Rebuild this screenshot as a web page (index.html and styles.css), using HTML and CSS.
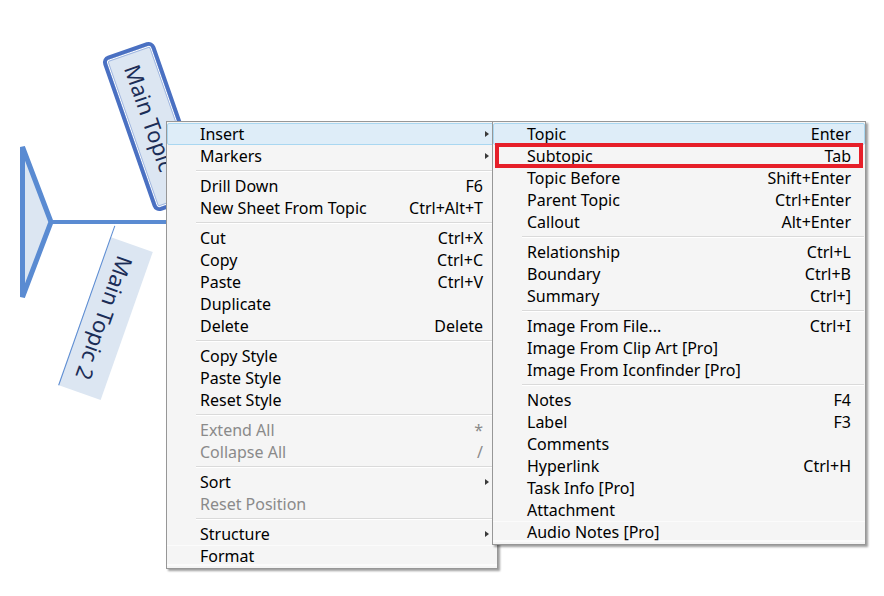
FILE: index.html
```html
<!DOCTYPE html>
<html>
<head>
<meta charset="utf-8">
<link rel="stylesheet" href="styles.css">
</head>
<body>
<div class="stage">
  <svg class="fish" width="884" height="596" viewBox="0 0 884 596">
    <polygon points="22.5,147 51,222 22.5,297" fill="#dce6f2" stroke="#5a8bd2" stroke-width="5" stroke-linejoin="bevel"/>
    <line x1="50" y1="222" x2="200" y2="222" stroke="#5a8bd2" stroke-width="4"/>
  </svg>
  <div class="topic topic-main"><span>Main Topic</span></div>
  <div class="topic topic-sub"><span>Main Topic 2</span></div>

  <div class="menu menu-main">
    <div class="item active"><span>Insert</span><i class="arrow"></i></div>
    <div class="item"><span>Markers</span><i class="arrow"></i></div>
    <div class="sep"></div>
    <div class="item"><span>Drill Down</span><span>F6</span></div>
    <div class="item"><span>New Sheet From Topic</span><span>Ctrl+Alt+T</span></div>
    <div class="sep"></div>
    <div class="item"><span>Cut</span><span>Ctrl+X</span></div>
    <div class="item"><span>Copy</span><span>Ctrl+C</span></div>
    <div class="item"><span>Paste</span><span>Ctrl+V</span></div>
    <div class="item"><span>Duplicate</span></div>
    <div class="item"><span>Delete</span><span>Delete</span></div>
    <div class="sep"></div>
    <div class="item"><span>Copy Style</span></div>
    <div class="item"><span>Paste Style</span></div>
    <div class="item"><span>Reset Style</span></div>
    <div class="sep"></div>
    <div class="item disabled"><span>Extend All</span><span>*</span></div>
    <div class="item disabled"><span>Collapse All</span><span>/</span></div>
    <div class="sep"></div>
    <div class="item"><span>Sort</span><i class="arrow"></i></div>
    <div class="item disabled"><span>Reset Position</span></div>
    <div class="sep"></div>
    <div class="item"><span>Structure</span><i class="arrow"></i></div>
    <div class="item last"><span>Format</span></div>
  </div>

  <div class="menu menu-sub">
    <div class="item active"><span>Topic</span><span>Enter</span></div>
    <div class="item"><span>Subtopic</span><span>Tab</span></div>
    <div class="item"><span>Topic Before</span><span>Shift+Enter</span></div>
    <div class="item"><span>Parent Topic</span><span>Ctrl+Enter</span></div>
    <div class="item"><span>Callout</span><span>Alt+Enter</span></div>
    <div class="sep"></div>
    <div class="item"><span>Relationship</span><span>Ctrl+L</span></div>
    <div class="item"><span>Boundary</span><span>Ctrl+B</span></div>
    <div class="item"><span>Summary</span><span>Ctrl+]</span></div>
    <div class="sep"></div>
    <div class="item"><span>Image From File...</span><span>Ctrl+I</span></div>
    <div class="item"><span>Image From Clip Art [Pro]</span></div>
    <div class="item"><span>Image From Iconfinder [Pro]</span></div>
    <div class="sep"></div>
    <div class="item"><span>Notes</span><span>F4</span></div>
    <div class="item"><span>Label</span><span>F3</span></div>
    <div class="item"><span>Comments</span></div>
    <div class="item"><span>Hyperlink</span><span>Ctrl+H</span></div>
    <div class="item"><span>Task Info [Pro]</span></div>
    <div class="item"><span>Attachment</span></div>
    <div class="item last"><span>Audio Notes [Pro]</span></div>
    <div class="mark"></div>
  </div>
</div>
</body>
</html>
```
FILE: styles.css
```css
html, body {
  margin: 0;
  padding: 0;
  background: #ffffff;
}

.stage {
  position: relative;
  width: 884px;
  height: 596px;
  overflow: hidden;
  font-family: "Noto Sans", "Open Sans", sans-serif;
}

.fish {
  position: absolute;
  left: 0;
  top: 0;
}

.topic {
  position: absolute;
  box-sizing: border-box;
  display: flex;
  align-items: center;
  background: #dce6f2;
  color: #1b2d57;
  font-size: 22px;
  white-space: nowrap;
}

.topic-main {
  left: 72px;
  top: 98.5px;
  width: 164px;
  height: 55px;
  transform: rotate(70.8deg);
  border: 4px solid #4a70c2;
  border-radius: 7px;
  box-shadow: inset 0 0 0 1px #ffffff, inset 0 0 0 2px #9fb6e0;
  padding-left: 13px;
}

.topic-sub {
  left: 26.5px;
  top: 295.5px;
  width: 157px;
  height: 45px;
  transform: rotate(109.4deg);
  justify-content: center;
}

.topic-sub::before {
  content: "";
  position: absolute;
  left: -12px;
  right: 0;
  bottom: 0;
  height: 1px;
  background: #5a8bd2;
}

.menu {
  position: absolute;
  box-sizing: border-box;
  background: #f5f5f5;
  border: 1px solid #979797;
  padding: 1px 0;
  box-shadow: 2px 2px 2px rgba(0, 0, 0, 0.38);
  font-size: 16px;
  color: #000000;
}

.menu-main {
  left: 166px;
  top: 121px;
  width: 332px;
}

.menu-sub {
  left: 492px;
  top: 121px;
  width: 374px;
}

.item {
  box-sizing: border-box;
  height: 22px;
  display: flex;
  align-items: center;
  justify-content: space-between;
  padding: 0 13px 0 32px;
  border: 1px solid transparent;
  white-space: nowrap;
  line-height: 20px;
}

.menu-sub .item {
  padding-left: 33px;
}

.item.active {
  background: #deedf8;
  border-color: #a9d7f1;
  border-radius: 2px;
}

.item.disabled {
  color: #8a8a8a;
}

.item.last {
  background: linear-gradient(#f5f5f5 0, #f5f5f5 18px, #fbfbfb 18px);
}

.arrow {
  width: 0;
  height: 0;
  border-left: 4px solid #3a3a3a;
  border-top: 3.5px solid transparent;
  border-bottom: 3.5px solid transparent;
  margin-right: -6px;
}

.sep {
  height: 8px;
  margin-left: 29px;
  margin-right: 1px;
  box-sizing: border-box;
  padding-top: 3px;
}

.sep::before {
  content: "";
  display: block;
  height: 1px;
  background: #dadada;
  border-bottom: 1px solid #ffffff;
}

.mark {
  position: absolute;
  left: 2px;
  top: 21px;
  width: 368px;
  height: 25px;
  box-sizing: border-box;
  border: 4px solid #e61f29;
}
```
